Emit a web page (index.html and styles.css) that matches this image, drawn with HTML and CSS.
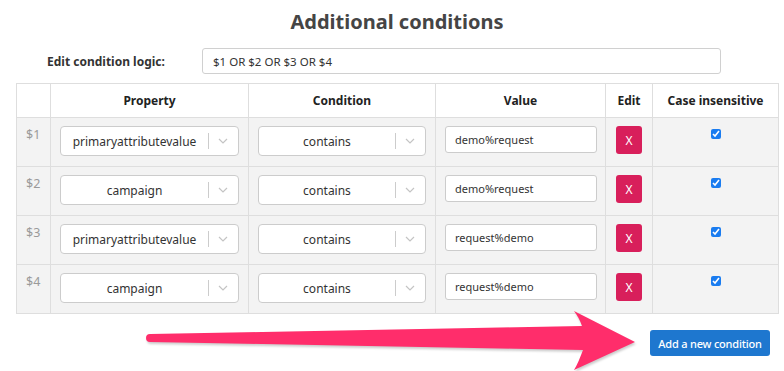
FILE: index.html
```html
<!DOCTYPE html>
<html lang="en">
<head>
    <meta charset="UTF-8">
    <meta name="viewport" content="width=device-width, initial-scale=1.0">
    <title>Additional conditions</title>
    <link rel="stylesheet" href="styles.css">
</head>
<body>
    <div class="page">
        <h2 class="title">Additional conditions</h2>

        <div class="logic-row">
            <label for="logic">Edit condition logic:</label>
            <input type="text" id="logic" value="$1 OR $2 OR $3 OR $4">
        </div>

        <table class="conditions">
            <colgroup>
                <col class="col-num">
                <col class="col-prop">
                <col class="col-cond">
                <col class="col-value">
                <col class="col-edit">
                <col class="col-case">
            </colgroup>
            <thead>
                <tr>
                    <th></th>
                    <th>Property</th>
                    <th>Condition</th>
                    <th>Value</th>
                    <th>Edit</th>
                    <th>Case insensitive</th>
                </tr>
            </thead>
            <tbody>
                <tr>
                    <td class="num">$1</td>
                    <td><div class="select prop"><span class="select-text">primaryattributevalue</span><span class="select-sep"></span><svg class="chevron" width="10" height="6" viewBox="0 0 10 6"><path d="M1 1 L5 5 L9 1" fill="none" stroke="#c4c4c4" stroke-width="1.2"/></svg></div></td>
                    <td><div class="select cond"><span class="select-text">contains</span><span class="select-sep"></span><svg class="chevron" width="10" height="6" viewBox="0 0 10 6"><path d="M1 1 L5 5 L9 1" fill="none" stroke="#c4c4c4" stroke-width="1.2"/></svg></div></td>
                    <td><input type="text" class="value-input" value="demo%request"></td>
                    <td class="edit"><button class="remove-btn">X</button></td>
                    <td class="case"><input type="checkbox" checked></td>
                </tr>
                <tr>
                    <td class="num">$2</td>
                    <td><div class="select prop"><span class="select-text">campaign</span><span class="select-sep"></span><svg class="chevron" width="10" height="6" viewBox="0 0 10 6"><path d="M1 1 L5 5 L9 1" fill="none" stroke="#c4c4c4" stroke-width="1.2"/></svg></div></td>
                    <td><div class="select cond"><span class="select-text">contains</span><span class="select-sep"></span><svg class="chevron" width="10" height="6" viewBox="0 0 10 6"><path d="M1 1 L5 5 L9 1" fill="none" stroke="#c4c4c4" stroke-width="1.2"/></svg></div></td>
                    <td><input type="text" class="value-input" value="demo%request"></td>
                    <td class="edit"><button class="remove-btn">X</button></td>
                    <td class="case"><input type="checkbox" checked></td>
                </tr>
                <tr>
                    <td class="num">$3</td>
                    <td><div class="select prop"><span class="select-text">primaryattributevalue</span><span class="select-sep"></span><svg class="chevron" width="10" height="6" viewBox="0 0 10 6"><path d="M1 1 L5 5 L9 1" fill="none" stroke="#c4c4c4" stroke-width="1.2"/></svg></div></td>
                    <td><div class="select cond"><span class="select-text">contains</span><span class="select-sep"></span><svg class="chevron" width="10" height="6" viewBox="0 0 10 6"><path d="M1 1 L5 5 L9 1" fill="none" stroke="#c4c4c4" stroke-width="1.2"/></svg></div></td>
                    <td><input type="text" class="value-input" value="request%demo"></td>
                    <td class="edit"><button class="remove-btn">X</button></td>
                    <td class="case"><input type="checkbox" checked></td>
                </tr>
                <tr>
                    <td class="num">$4</td>
                    <td><div class="select prop"><span class="select-text">campaign</span><span class="select-sep"></span><svg class="chevron" width="10" height="6" viewBox="0 0 10 6"><path d="M1 1 L5 5 L9 1" fill="none" stroke="#c4c4c4" stroke-width="1.2"/></svg></div></td>
                    <td><div class="select cond"><span class="select-text">contains</span><span class="select-sep"></span><svg class="chevron" width="10" height="6" viewBox="0 0 10 6"><path d="M1 1 L5 5 L9 1" fill="none" stroke="#c4c4c4" stroke-width="1.2"/></svg></div></td>
                    <td><input type="text" class="value-input" value="request%demo"></td>
                    <td class="edit"><button class="remove-btn">X</button></td>
                    <td class="case"><input type="checkbox" checked></td>
                </tr>
            </tbody>
        </table>

        <div class="footer">
            <button class="add-btn">Add a new condition</button>
        </div>

        <!-- annotation arrow drawn over the page -->
        <svg class="annotation" width="784" height="371" viewBox="0 0 784 371">
            <path d="M150 334 L582 326 C580 320 577 315 574 311 L635 342 L574 370 C577 365 580 358 583 350 L150 342 A4 4 0 0 1 150 334 Z" fill="#ff2d6b"/>
        </svg>
    </div>
</body>
</html>
```

FILE: styles.css
```css
body {
    margin: 0;
    font-family: "Noto Sans", "Open Sans", sans-serif;
    color: #333;
    background: #fff;
}
.page {
    position: relative;
    width: 784px;
    height: 371px;
    padding: 0 6px 0 16px;
    box-sizing: border-box;
}
.title {
    margin: 0;
    padding-top: 9px;
    font-size: 20px;
    line-height: 26px;
    font-weight: bold;
    color: #454545;
    text-align: center;
}
.logic-row {
    display: flex;
    align-items: center;
    margin-top: 13px;
    height: 26px;
}
.logic-row label {
    width: 186px;
    padding-left: 31px;
    box-sizing: border-box;
    font-size: 12px;
    font-weight: bold;
    color: #333;
}
.logic-row input {
    width: 519px;
    height: 26px;
    box-sizing: border-box;
    padding: 0 10px;
    border: 1px solid #d0d0d0;
    border-radius: 3px;
    font-family: inherit;
    font-size: 11.5px;
    color: #333;
}
.conditions {
    margin-top: 9px;
    width: 762px;
    border-collapse: collapse;
    table-layout: fixed;
}
.conditions th,
.conditions td {
    border: 1px solid #dedede;
    padding: 0;
    box-sizing: border-box;
}
.conditions th {
    height: 34px;
    font-size: 12px;
    font-weight: bold;
    color: #222;
    background: #fff;
}
.conditions td {
    height: 49px;
    background: #f3f3f3;
    vertical-align: top;
    padding: 8px 0 0 9px;
}
.col-num { width: 34px; }
.col-prop { width: 198px; }
.col-cond { width: 187px; }
.col-value { width: 170px; }
.col-edit { width: 47px; }
.col-case { width: 126px; }
.conditions td.num {
    padding: 9px 0 0 9px;
    font-size: 12.5px;
    line-height: 16px;
    color: #9a9a9a;
}
.select {
    display: flex;
    align-items: center;
    height: 30px;
    background: #fff;
    border: 1px solid #ccc;
    border-radius: 4px;
    box-sizing: border-box;
}
.select.prop { width: 179px; }
.select.cond { width: 168px; }
.select-text {
    flex: 1;
    text-align: center;
    font-size: 12px;
    color: #333;
    white-space: nowrap;
}
.select-sep {
    width: 1px;
    height: 16px;
    background: #ccc;
}
.chevron {
    margin: 0 10px 0 9px;
}
.value-input {
    display: block;
    width: 152px;
    height: 27px;
    box-sizing: border-box;
    padding: 0 9px;
    border: 1px solid #ccc;
    border-radius: 3px;
    font-family: inherit;
    font-size: 11px;
    color: #333;
}
.conditions td.edit {
    padding-left: 10px;
}
.remove-btn {
    display: block;
    width: 26px;
    height: 28px;
    padding: 0;
    border: none;
    border-radius: 3px;
    background: #d81f5b;
    color: #fff;
    font-family: inherit;
    font-size: 12px;
    cursor: pointer;
}
.conditions td.case {
    padding: 11px 0 0 0;
}
.case input {
    display: block;
    width: 10px;
    height: 10px;
    margin: 0 auto;
    accent-color: #1a7cf0;
}
.footer {
    display: flex;
    justify-content: flex-end;
    margin-top: 16px;
    padding-right: 8px;
}
.add-btn {
    width: 120px;
    height: 26px;
    padding: 0;
    border: none;
    border-radius: 3px;
    background: #1e77cf;
    color: #fff;
    font-family: inherit;
    font-size: 11px;
    font-weight: 500;
    letter-spacing: -0.2px;
    cursor: pointer;
}
.annotation {
    position: absolute;
    top: 0;
    left: 0;
    pointer-events: none;
    filter: drop-shadow(1px 2px 1px rgba(0, 0, 0, 0.2));
}
```
